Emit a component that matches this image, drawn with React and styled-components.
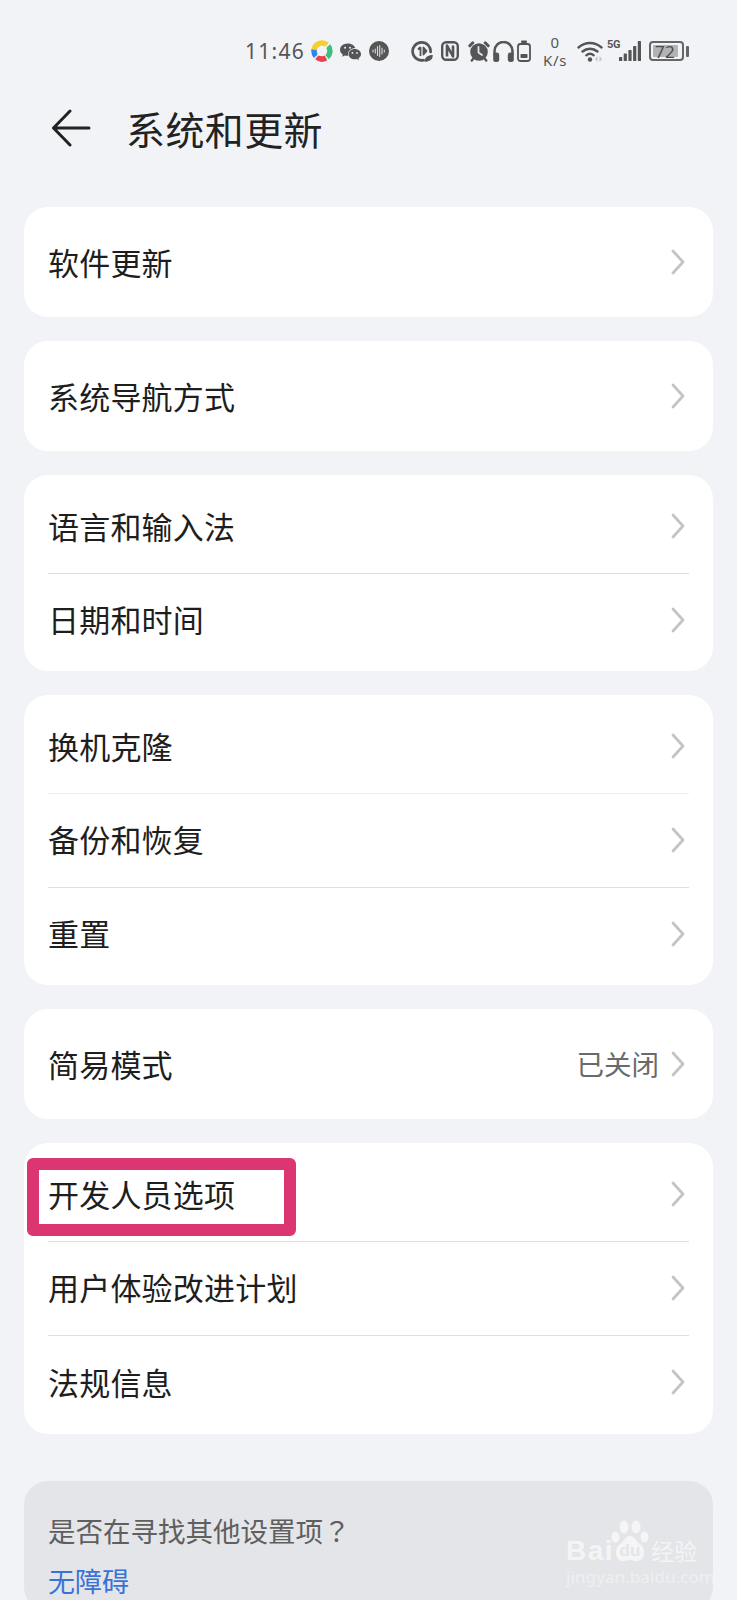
import React from 'react';
import styled, { createGlobalStyle } from 'styled-components';

const GlobalStyle = createGlobalStyle`
  html, body {
    margin: 0;
    padding: 0;
    background: #f1f3f7;
  }
`;

const Page = styled.div`
  width: 737px;
  height: 1600px;
  overflow: hidden;
  background: #f1f3f7;
  font-family: "Noto Sans CJK SC", "Noto Sans", sans-serif;
  color: #1e1e1e;
`;

const StatusBar = styled.div`
  height: 78px;
  padding: 24px 0 0 245px;
  box-sizing: border-box;
  display: flex;
  align-items: center;
  color: #555;
`;

const Time = styled.span`
  width: 57px;
  font-family: "Noto Sans", sans-serif;
  font-size: 21px;
  letter-spacing: 1.3px;
  line-height: 1;
  white-space: nowrap;
`;

const Icon = styled.svg`
  flex: none;
  margin-left: ${p => p.$ml || 0}px;
  margin-top: ${p => p.$mt || 0}px;
`;

const Speed = styled.div`
  width: 26px;
  margin-left: 11px;
  display: flex;
  flex-direction: column;
  align-items: center;
  font-family: "Noto Sans", sans-serif;
  font-size: 15px;
  line-height: 18px;
  letter-spacing: 0.6px;
`;

const FiveG = styled.span`
  width: 12px;
  margin: -14px 0 0 2px;
  font-family: "Roboto", sans-serif;
  font-size: 11px;
  font-weight: 700;
  line-height: 1;
  letter-spacing: -0.3px;
`;

const Battery = styled.div`
  width: 35px;
  height: 20px;
  margin-left: 8px;
  box-sizing: border-box;
  border: 2px solid #666;
  border-radius: 4px;
  padding: 2px;
  display: flex;
`;

const BatteryFill = styled.div`
  width: 23px;
  background: #b3b3b5;
  border-radius: 1px;
  display: flex;
  align-items: center;
  font-family: "Noto Sans", sans-serif;
  font-size: 17px;
  line-height: 1;
  letter-spacing: 0.2px;
  color: #4c4c4c;
  padding-left: 2px;
  white-space: nowrap;
`;

const BatteryNub = styled.div`
  width: 3px;
  height: 11px;
  margin-left: 2px;
  background: #666;
  border-radius: 1px;
`;

const Header = styled.header`
  height: 100px;
  display: flex;
  align-items: center;
  padding-left: 51px;
`;

const Title = styled.h1`
  margin: 0 0 0 35px;
  font-size: 39px;
  font-weight: 400;
  line-height: 1;
  letter-spacing: 0.4px;
  color: #222;
`;

const List = styled.main`
  margin-top: 29px;
  padding: 0 24px;
  display: flex;
  flex-direction: column;
  gap: 24px;
`;

const Card = styled.section`
  background: #fff;
  border-radius: 24px;
  overflow: hidden;
`;

const Row = styled.div`
  height: ${p => p.$h}px;
  box-sizing: border-box;
  padding: ${p => p.$pt || 0}px 28px ${p => p.$pb || 0}px 24px;
  display: flex;
  align-items: center;
  justify-content: space-between;
`;

const Label = styled.span`
  margin-bottom: 2px;
  font-size: 31px;
  font-weight: 400;
  line-height: 1;
  letter-spacing: 0.2px;
  color: #1e1e1e;
`;

const RowEnd = styled.div`
  display: flex;
  align-items: center;
  gap: 12px;
`;

const Value = styled.span`
  font-size: 27.5px;
  line-height: 1;
  color: #6a6a6a;
`;

const Divider = styled.div`
  height: 1px;
  margin: 0 24px;
  background: ${p => (p.$faint ? '#f0f0f0' : '#dfdfdf')};
`;

const Highlight = styled.div`
  position: absolute;
  left: 27px;
  top: 1158px;
  width: 269px;
  height: 78px;
  box-sizing: border-box;
  border: 12px solid #dc3672;
  border-radius: 6px;
`;

const HelpCard = styled.section`
  position: relative;
  height: 130px;
  margin-top: 23px;
  padding: 31px 24px 0;
  box-sizing: border-box;
  background: #e4e5e8;
  border-radius: 24px;
`;

const HelpTitle = styled.div`
  font-size: 27.5px;
  line-height: 36px;
  color: #5f5f5f;
  white-space: nowrap;
`;

const Punct = styled.span`
  font-family: "Noto Sans CJK TC", sans-serif;
`;

const HelpLink = styled.div`
  margin-top: 15px;
  font-size: 27px;
  line-height: 36px;
  color: #3a72d8;
`;

const Watermark = styled.div`
  position: absolute;
  left: 542px;
  top: 39px;
  width: 132px;
  color: rgba(255, 255, 255, 0.62);
`;

const Brand = styled.div`
  display: flex;
  align-items: flex-end;
  height: 42px;
`;

const BrandWord = styled.span`
  font-family: "Liberation Sans", sans-serif;
  font-size: 28px;
  font-weight: 700;
  line-height: 22px;
  letter-spacing: 1.5px;
  width: 45px;
`;

const Paw = styled.div`
  position: relative;
  width: 38px;
  height: 42px;
  flex: none;
`;

const PawText = styled.span`
  position: absolute;
  left: 0;
  right: 0;
  bottom: 3px;
  text-align: center;
  font-family: "Liberation Sans", sans-serif;
  font-size: 17px;
  font-weight: 700;
  line-height: 1;
  color: #e4e5e8;
`;

const BrandCn = styled.span`
  margin-left: 2px;
  font-size: 23px;
  line-height: 24px;
  white-space: nowrap;
`;

const BrandUrl = styled.div`
  margin-top: 5px;
  font-family: "Noto Sans", sans-serif;
  font-size: 17px;
  line-height: 20px;
  white-space: nowrap;
  letter-spacing: 0.1px;
  opacity: 0.7;
`;

const gray = '#555';

const AppLogo = () => (
  <Icon width="22" height="22" viewBox="0 0 22 22" $ml={9} fill="none" strokeWidth="5.500">
    <path d="M3.100 9.600A8 8 0 0 1 16.100 4.900" stroke="#f6cf2f" />
    <path d="M17.100 5.900A8 8 0 0 1 16.100 17.100" stroke="#3fbf7f" />
    <path d="M15 17.900A8 8 0 0 1 5.900 17.100" stroke="#e8414f" />
    <path d="M4.900 16.100A8 8 0 0 1 3.100 9.600" stroke="#2f86ea" />
    <path d="M6.500 14C9.500 16 13 13.500 11 11S12.500 6 15.500 8" stroke="#f1f3f7" strokeWidth="1.800" />
  </Icon>
);

const WeChat = () => (
  <Icon width="21" height="18" viewBox="0 0 22 18" $ml={7} $mt={1}>
    <path d="M8 0C3.600 0 0 3 0 6.600c0 2 1.100 3.800 2.900 5L2.200 14l2.800-1.400c.9.300 1.900.4 3 .4.300 0 .5 0 .8 0-.2-.6-.3-1.200-.3-1.800C8.500 7.500 11.600 5 15.400 5c.3 0 .5 0 .7 0C15.200 2.100 11.900 0 8 0z" fill={gray} />
    <path d="M22 11.300C22 8.200 19 5.900 15.400 5.900s-6.300 2.300-6.300 5.400 2.800 5.400 6.300 5.400c.8 0 1.500-.1 2.200-.3l2.300 1.200-.6-2C21 14.500 22 13 22 11.300z" fill={gray} />
    <circle cx="5.300" cy="4.600" r="1" fill="#f1f3f7" />
    <circle cx="10.500" cy="4.600" r="1" fill="#f1f3f7" />
    <circle cx="13" cy="10" r=".9" fill="#f1f3f7" />
    <circle cx="17.800" cy="10" r=".9" fill="#f1f3f7" />
  </Icon>
);

const VoiceDot = () => (
  <Icon width="20" height="20" viewBox="0 0 20 20" $ml={8}>
    <circle cx="10" cy="10" r="10" fill={gray} />
    <g stroke="#d9dadd" strokeWidth="1.100" strokeLinecap="round">
      <path d="M4 9v2M6.300 8v4M8.500 5.500v9M10.700 4.500v11M13 7v6M15.300 9v2" />
    </g>
  </Icon>
);

const LeafRing = () => (
  <Icon width="22" height="21" viewBox="0 0 22 21" $ml={22}>
    <path d="M12.500 19.200A9 9 0 1 1 19.600 11" fill="none" stroke={gray} strokeWidth="2.700" strokeLinecap="round" />
    <path d="M9.500 6v9M7 8.500 9.500 6M12.500 6.500v7l3-3.500z" fill={gray} stroke={gray} strokeWidth="1.800" strokeLinejoin="round" />
    <path d="M13.500 20.800c0-4.500 3.500-6.800 8.300-6.800 0 4.500-3 6.800-8.300 6.800z" fill={gray} />
  </Icon>
);

const Nfc = () => (
  <Icon width="18" height="20" viewBox="0 0 18 20" $ml={8}>
    <rect x="1.200" y="1.200" width="15.600" height="17.600" rx="4" fill="none" stroke={gray} strokeWidth="2.400" />
    <path d="M6 15.500V4.500l6 11V4.500" fill="none" stroke={gray} strokeWidth="2.600" strokeLinejoin="round" />
  </Icon>
);

const Alarm = () => (
  <Icon width="22" height="21" viewBox="0 0 22 21" $ml={9}>
    <circle cx="11" cy="11" r="8.800" fill={gray} />
    <path d="M1.800 4.800 4.800 1.800M20.200 4.800 17.200 1.800" stroke={gray} strokeWidth="3" strokeLinecap="round" />
    <path d="M5 18 3.800 19.500M17 18 18.200 19.500" stroke={gray} strokeWidth="2.400" strokeLinecap="round" />
    <path d="M10.500 6v5.500l3.500 2.500" fill="none" stroke="#e4e5e8" strokeWidth="1.800" strokeLinecap="round" />
  </Icon>
);

const Headphones = () => (
  <Icon width="21" height="21" viewBox="0 0 21 21" $ml={3}>
    <path d="M1.500 14v-4a9 9 0 0 1 18 0V14" fill="none" stroke={gray} strokeWidth="2.500" />
    <rect x=".2" y="11.500" width="6" height="9.500" rx="2.500" fill={gray} />
    <rect x="14.800" y="11.500" width="6" height="9.500" rx="2.500" fill={gray} />
  </Icon>
);

const SmallBattery = () => (
  <Icon width="14" height="22" viewBox="0 0 14 22" $ml={3}>
    <rect x="1" y="4" width="12" height="17" rx="2.500" fill="none" stroke={gray} strokeWidth="1.800" />
    <rect x="4" y=".5" width="6" height="2.500" rx="1" fill={gray} />
    <rect x="3.500" y="14" width="7" height="4" rx=".8" fill={gray} />
  </Icon>
);

const Wifi = () => (
  <Icon width="28" height="22" viewBox="0 0 28 22" $ml={9}>
    <g fill="none" stroke={gray} strokeWidth="2.400" strokeLinecap="round">
      <path d="M1.500 7.500C8.500 1.500 17.500 1.500 24.500 7.500" />
      <path d="M5.500 11.500C10 7.800 16 7.800 20.500 11.500" />
      <path d="M9.300 15.300C11.500 13.400 14.500 13.400 16.700 15.300" />
    </g>
    <circle cx="13" cy="19.500" r="2.200" fill={gray} />
    <path d="M20.500 16v6L18 19zM22.500 16v6l2.500-3z" fill="#c3c4c6" />
  </Icon>
);

const Signal = () => (
  <Icon width="22" height="20" viewBox="0 0 22 20">
    <rect x="0" y="16" width="3.200" height="4" rx=".6" fill={gray} />
    <rect x="4.700" y="12.500" width="3.200" height="7.500" rx=".6" fill={gray} />
    <rect x="9.400" y="9" width="3.200" height="11" rx=".6" fill={gray} />
    <rect x="14.100" y="5" width="3.200" height="15" rx=".6" fill={gray} />
    <rect x="18.800" y="0" width="3.200" height="20" rx=".6" fill={gray} />
  </Icon>
);

const Back = () => (
  <svg width="40" height="38" viewBox="0 0 40 38" fill="none" stroke="#222" strokeWidth="3" strokeLinecap="round" strokeLinejoin="round">
    <path d="M19 2 2.500 19 19 36M3 19h35" />
  </svg>
);

const Chevron = () => (
  <svg width="14" height="26" viewBox="0 0 14 26" fill="none" stroke="#c4c4c4" strokeWidth="2.800" strokeLinecap="round" strokeLinejoin="round">
    <path d="M2 2l10 11L2 24" />
  </svg>
);

const Item = ({ label, value, h, pt, pb }) => (
  <Row $h={h} $pt={pt} $pb={pb}>
    <Label>{label}</Label>
    <RowEnd>
      {value && <Value>{value}</Value>}
      <Chevron />
    </RowEnd>
  </Row>
);

export default function App() {
  return (
    <Page>
      <GlobalStyle />
      <StatusBar>
        <Time>11:46</Time>
        <AppLogo />
        <WeChat />
        <VoiceDot />
        <LeafRing />
        <Nfc />
        <Alarm />
        <Headphones />
        <SmallBattery />
        <Speed>
          <span>0</span>
          <span>K/s</span>
        </Speed>
        <Wifi />
        <FiveG>5G</FiveG>
        <Signal />
        <Battery>
          <BatteryFill>72</BatteryFill>
        </Battery>
        <BatteryNub />
      </StatusBar>
      <Header>
        <Back />
        <Title>系统和更新</Title>
      </Header>
      <List>
        <Card>
          <Item label="软件更新" h={110} />
        </Card>
        <Card>
          <Item label="系统导航方式" h={110} />
        </Card>
        <Card>
          <Item label="语言和输入法" h={98} pt={4} />
          <Divider />
          <Item label="日期和时间" h={97} pb={6} />
        </Card>
        <Card>
          <Item label="换机克隆" h={98} pt={4} />
          <Divider $faint />
          <Item label="备份和恢复" h={93} pb={2} />
          <Divider />
          <Item label="重置" h={97} pb={6} />
        </Card>
        <Card>
          <Item label="简易模式" value="已关闭" h={110} />
        </Card>
        <Card>
          <Item label="开发人员选项" h={98} pt={4} />
          <Divider />
          <Item label="用户体验改进计划" h={93} pb={2} />
          <Divider />
          <Item label="法规信息" h={98} pb={6} />
        </Card>
        <HelpCard>
          <HelpTitle>
            是否在寻找其他设置项<Punct>？</Punct>
          </HelpTitle>
          <HelpLink>无障碍</HelpLink>
          <Watermark>
            <Brand>
              <BrandWord>Bai</BrandWord>
              <Paw>
                <svg width="38" height="42" viewBox="0 0 38 42" fill="rgba(255,255,255,0.62)">
                  <ellipse cx="4.500" cy="17" rx="4" ry="5.500" />
                  <ellipse cx="13" cy="7" rx="4.500" ry="6.500" />
                  <ellipse cx="25" cy="7" rx="4.500" ry="6.500" />
                  <ellipse cx="33.500" cy="17" rx="4" ry="5.500" />
                  <path d="M19 16c-5 0-6 6-11 9-5 4-4 15 3 16 3 .5 5-1 8-1s5 1.500 8 1c7-1 8-12 3-16-5-3-6-9-11-9z" />
                </svg>
                <PawText>du</PawText>
              </Paw>
              <BrandCn>经验</BrandCn>
            </Brand>
            <BrandUrl>jingyan.baidu.com</BrandUrl>
          </Watermark>
        </HelpCard>
      </List>
      <Highlight />
    </Page>
  );
}
